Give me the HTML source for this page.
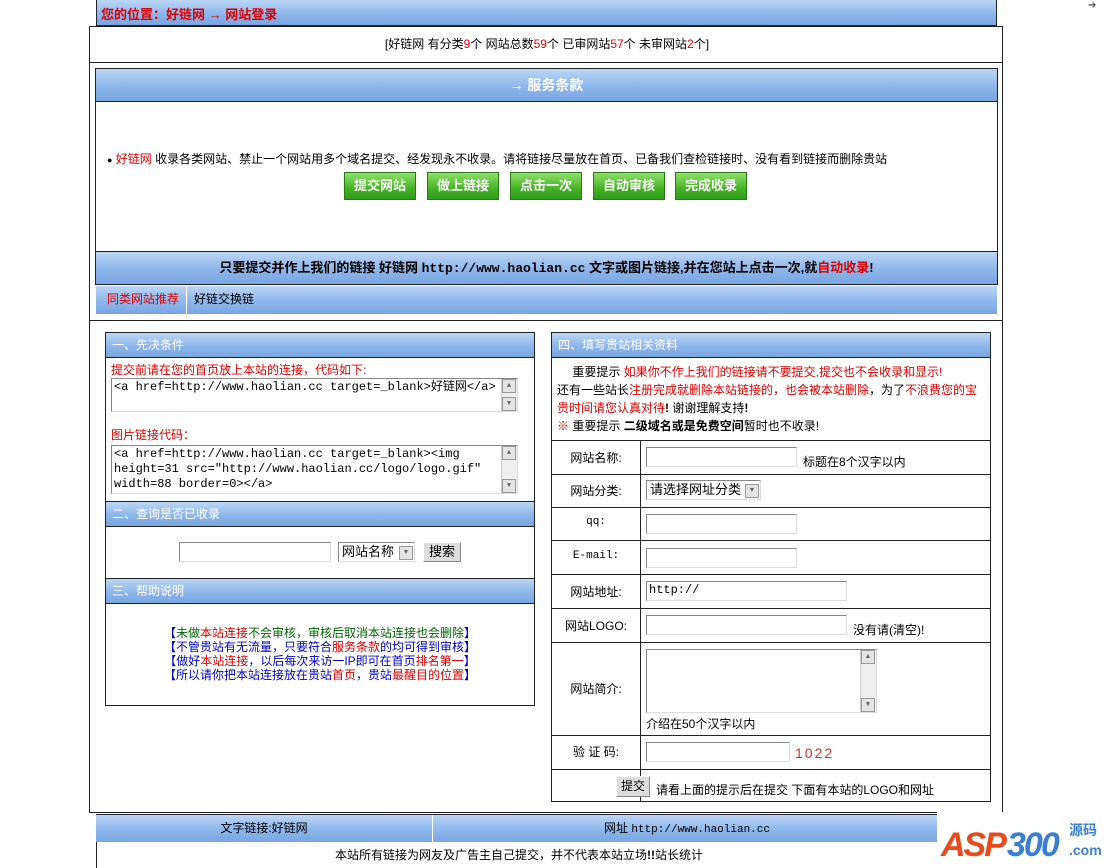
<!DOCTYPE html>
<html><head><meta charset="utf-8"><style>
*{margin:0;padding:0;box-sizing:border-box}
body{width:1110px;height:868px;background:#fff;position:relative;overflow:hidden;font-family:"Liberation Sans","Noto Sans CJK SC",sans-serif;font-size:12px;color:#000}
.a{position:absolute}
.g{background:linear-gradient(#bcd6f5,#8db6ea 55%,#79a6e2)}
.r{color:#d00}
.hd{color:#fff;font-size:12px;padding-left:6px;line-height:24px;border-bottom:1px solid #222}
.box{border:1px solid #222}
.in{position:absolute;border:1px solid #888;border-right-color:#ddd;border-bottom-color:#ddd;background:#fff;height:20px}
.btn{position:absolute;width:72px;height:28px;background:linear-gradient(#8fe06a,#46b326 60%,#2f9a1a);border:1px solid #2a7a18;color:#fff;font-weight:bold;font-size:13px;text-align:center;line-height:26px}
.row{position:absolute;left:0;width:438px;border-top:1px solid #222}
.lb{position:absolute;left:0;width:88px;text-align:center;top:0}
.sb{position:absolute;right:0;width:16px;background:#eee;border-left:1px solid #ccc}
.ar{position:absolute;width:14px;height:14px;background:#e4e4e4;border:1px solid #999;font-size:7px;text-align:center;line-height:12px;color:#666}
.mono{font-family:"Liberation Mono","Noto Sans CJK SC",monospace}
</style></head><body>
<div class="a g" style="left:96px;top:0;width:901px;height:26px;border:1px solid #223;border-top:none"><span class="r" style="position:absolute;left:4px;top:4px;font-weight:bold;font-size:13px">您的位置：好链网 → 网站登录</span></div>
<div class="a" style="left:1088px;top:0;font-size:10px;color:#555">➔</div>
<div class="a box" style="left:89px;top:26px;width:914px;height:787px"></div>
<div class="a" style="left:89px;top:62px;width:914px;border-top:1px solid #222"></div>
<div class="a" style="left:0;top:35px;width:1094px;text-align:center">[好链网 有分类<span class="r">9</span>个 网站总数<span class="r">59</span>个 已审网站<span class="r">57</span>个 未审网站<span class="r">2</span>个]</div>
<div class="a box" style="left:95px;top:68px;width:903px;height:217px"></div>
<div class="a g" style="left:96px;top:69px;width:901px;height:33px;border-bottom:1px solid #222;color:#fff;font-weight:bold;font-size:14px;text-align:center;line-height:33px"><b>→</b> 服务条款</div>
<div class="a" style="left:107px;top:150px"><span style="font-size:9px">●</span> <span class="r">好链网</span> 收录各类网站、禁止一个网站用多个域名提交、经发现永不收录。请将链接尽量放在首页、已备我们查检链接时、没有看到链接而删除贵站</div>
<div class="btn" style="left:344px;top:172px">提交网站</div>
<div class="btn" style="left:427px;top:172px">做上链接</div>
<div class="btn" style="left:510px;top:172px">点击一次</div>
<div class="btn" style="left:593px;top:172px">自动审核</div>
<div class="btn" style="left:675px;top:172px">完成收录</div>
<div class="a g" style="left:96px;top:251px;width:901px;height:34px;border-top:1px solid #222;border-bottom:1px solid #222;font-weight:bold;font-size:13px;text-align:center;line-height:32px">只要提交并作上我们的链接 好链网 <span class="mono">http://www.haolian.cc</span> 文字或图片链接,并在您站上点击一次,就<span class="r">自动收录</span>!</div>
<div class="a g" style="left:96px;top:286px;width:901px;height:28px;line-height:26px"><span class="r" style="position:absolute;left:11px">同类网站推荐</span><div class="a" style="left:90px;top:0;height:28px;border-left:1px solid #fff"></div><span style="position:absolute;left:98px">好链交换链</span></div>
<div class="a" style="left:89px;top:320px;width:914px;border-top:1px solid #222"></div>

<div class="a box" style="left:105px;top:332px;width:430px;height:374px"></div>
<div class="a g hd" style="left:106px;top:333px;width:428px">一、先决条件</div>
<div class="a r" style="left:111px;top:361px">提交前请在您的首页放上本站的连接，代码如下:</div>
<div class="in mono" style="left:111px;top:378px;width:407px;height:34px;font-size:12px;padding:1px 2px;line-height:15px">&lt;a href=http://www.haolian.cc target=_blank&gt;好链网&lt;/a&gt;<div class="sb" style="top:0;height:32px"><div class="ar" style="top:0">▲</div><div class="ar" style="bottom:0">▼</div></div></div>
<div class="a r" style="left:111px;top:426px">图片链接代码：</div>
<div class="in mono" style="left:111px;top:445px;width:407px;height:49px;font-size:12px;padding:1px 2px;line-height:15px">&lt;a href=http://www.haolian.cc target=_blank&gt;&lt;img<br>height=31 src="http://www.haolian.cc/logo/logo.gif"<br>width=88 border=0&gt;&lt;/a&gt;<div class="sb" style="top:0;height:47px"><div class="ar" style="top:0">▲</div><div class="ar" style="bottom:0">▼</div></div></div>
<div class="a g hd" style="left:106px;top:501px;width:428px;border-top:1px solid #222">二、查询是否已收录</div>
<div class="in" style="left:179px;top:542px;width:152px"></div>
<div class="in" style="left:338px;top:542px;width:77px;line-height:17px;padding-left:3px;font-size:13px">网站名称<div class="ar" style="right:1px;top:3px">▼</div></div>
<div class="a" style="left:423px;top:542px;width:38px;height:20px;background:#ddd;border:1px solid #888;border-top-color:#fff;border-left-color:#fff;text-align:center;line-height:17px;font-size:13px">搜索</div>
<div class="a g hd" style="left:106px;top:578px;width:428px;border-top:1px solid #222">三、帮助说明</div>
<div class="a" style="left:106px;top:626px;width:428px;text-align:center;line-height:14px;color:#060">
<span style="color:#00c">【</span>未做<span class="r">本站连接</span>不会审核，审核后取消本站连接也会删除<span style="color:#00c">】</span><br>
<span style="color:#00c">【</span><span style="color:#00c">不管贵站有无流量，只要符合</span><span class="r">服务条款</span><span style="color:#00c">的均可得到审核】</span><br>
<span style="color:#00c">【做好</span><span class="r">本站连接</span><span style="color:#00c">，以后每次来访一IP即可在首页</span><span class="r">排名第一</span><span style="color:#00c">】</span><br>
<span style="color:#00c">【所以请你把本站连接放在贵站</span><span class="r">首页</span><span style="color:#00c">，贵站</span><span class="r">最醒目的位置</span><span style="color:#00c">】</span></div>

<div class="a box" style="left:551px;top:332px;width:440px;height:470px">
<div class="a g hd" style="left:0;top:0;width:438px">四、填写贵站相关资料</div>
<div class="a" style="left:5px;top:30px;width:430px;line-height:18px">　 重要提示 <span class="r">如果你不作上我们的链接请不要提交,提交也不会收录和显示!</span><br>还有一些站长<span class="r">注册完成就删除本站链接的，也会被本站删除</span>，为了<span class="r">不浪费您的宝贵时间请您认真对待</span><b>!</b> 谢谢理解支持<b>!</b><br><span class="r">※</span> 重要提示 <b>二级域名或是免费空间</b>暂时也不收录!</div>
<div class="a" style="left:88px;top:107px;height:362px;border-left:1px solid #222"></div>
<div class="row" style="top:107px;height:34px"><span class="lb" style="top:8px">网站名称:</span><div class="in" style="left:94px;top:6px;width:151px"></div><span class="a" style="left:251px;top:12px">标题在8个汉字以内</span></div>
<div class="row" style="top:141px;height:33px"><span class="lb" style="top:7px">网站分类:</span><div class="in" style="left:94px;top:5px;width:115px;font-size:13px;line-height:17px;padding-left:3px">请选择网址分类<div class="ar" style="right:1px;top:3px">▼</div></div></div>
<div class="row" style="top:174px;height:33px"><span class="lb mono" style="top:8px;font-size:11px">qq:</span><div class="in" style="left:94px;top:6px;width:151px"></div></div>
<div class="row" style="top:207px;height:34px"><span class="lb mono" style="top:9px;font-size:11px">E-mail:</span><div class="in" style="left:94px;top:7px;width:151px"></div></div>
<div class="row" style="top:241px;height:34px"><span class="lb" style="top:8px">网站地址:</span><div class="in mono" style="left:94px;top:6px;width:201px;padding-left:2px;line-height:17px">http://</div></div>
<div class="row" style="top:275px;height:34px"><span class="lb" style="top:8px">网站LOGO:</span><div class="in" style="left:94px;top:6px;width:201px"></div><span class="a" style="left:301px;top:12px">没有请(清空)!</span></div>
<div class="row" style="top:309px;height:93px"><span class="lb" style="top:37px">网站简介:</span><div class="in" style="left:94px;top:6px;width:231px;height:64px"><div class="sb" style="top:0;height:62px"><div class="ar" style="top:0">▲</div><div class="ar" style="bottom:0">▼</div></div></div><span class="a" style="left:94px;top:72px">介绍在50个汉字以内</span></div>
<div class="row" style="top:402px;height:34px"><span class="lb" style="top:7px">验 证 码:</span><div class="in" style="left:94px;top:6px;width:144px"></div><span class="a" style="left:243px;top:9px;color:#c33;font-size:14px;letter-spacing:2px">1022</span></div>
<div class="row" style="top:436px;height:33px"><div class="a" style="left:64px;top:6px;width:34px;height:21px;background:#ddd;border:1px solid #888;border-top-color:#fff;border-left-color:#fff;text-align:center;line-height:18px">提交</div><span class="a" style="left:104px;top:11px">请看上面的提示后在提交 下面有本站的LOGO和网址</span></div>
</div>

<div class="a g" style="left:96px;top:814px;width:845px;height:28px;border-top:1px solid #223;line-height:26px">
<span class="a" style="left:0;width:336px;text-align:center">文字链接:好链网</span><div class="a" style="left:336px;top:0;height:28px;border-left:1px solid #fff"></div><span class="a" style="left:337px;width:508px;text-align:center">网址 <span class="mono" style="font-size:11px">http://www.haolian.cc</span></span></div>
<div class="a" style="left:96px;top:842px;width:845px;height:26px;border-left:1px solid #222;text-align:center;line-height:26px">本站所有链接为网友及广告主自己提交，并不代表本站立场<b>!!</b>站长统计</div>
<div class="a" style="left:937px;top:812px;width:170px;height:56px;background:#fff">
<span class="a" style="left:4px;top:14px;font-size:34px;font-weight:bold;font-style:italic;color:#e84a1a;letter-spacing:-2px">ASP</span>
<span class="a" style="left:70px;top:14px;font-size:34px;font-weight:bold;font-style:italic;color:#3a7fd0;letter-spacing:-2px">300</span>
<span class="a" style="left:132px;top:8px;font-size:14px;font-weight:bold;color:#3a7fd0">源码</span>
<span class="a" style="left:132px;top:30px;font-size:14px;font-weight:bold;color:#3a7fd0">.com</span>
</div>
</body></html>
